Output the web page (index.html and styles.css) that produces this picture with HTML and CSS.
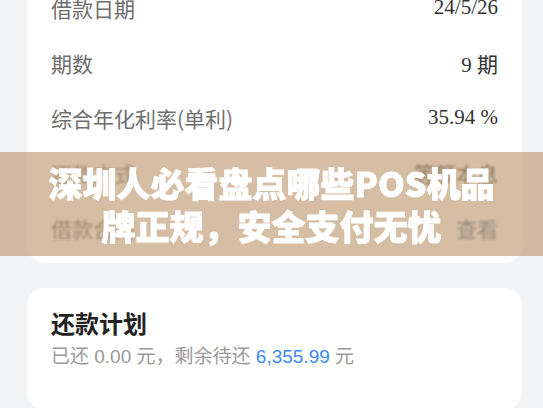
FILE: index.html
```html
<!DOCTYPE html>
<html lang="zh-CN">
<head>
    <meta charset="UTF-8">
    <meta name="viewport" content="width=device-width, initial-scale=1.0">
    <title>深圳人必看盘点哪些POS机品牌正规</title>
    <link rel="stylesheet" href="styles.css">
</head>
<body>
    <div class="page">
        <div class="card info">
            <div class="row">
                <span class="label">借款日期</span>
                <span class="value">24/5/26</span>
            </div>
            <div class="row">
                <span class="label">期数</span>
                <span class="value">9 期</span>
            </div>
            <div class="row">
                <span class="label">综合年化利率(单利)</span>
                <span class="value">35.94 %</span>
            </div>
            <div class="row">
                <span class="label">还款方式</span>
                <span class="value">等额本息</span>
            </div>
            <div class="row">
                <span class="label">借款合同</span>
                <span class="value link">查看</span>
            </div>
        </div>

        <div class="card plan">
            <h2>还款计划</h2>
            <p>已还 0.00 元，剩余待还 <span class="amount">6,355.99</span> 元</p>
        </div>
    </div>

    <div class="banner">
        <h1>深圳人必看盘点哪些POS机品牌正规，安全支付无忧</h1>
    </div>
</body>
</html>
```

FILE: styles.css
```css
body {
    margin: 0;
    background-color: #f2f3f5;
    font-family: "Noto Sans CJK SC", "Noto Sans", sans-serif;
    overflow: hidden;
}
.page {
    padding: 0 21px 0 27px;
}
.card {
    background-color: #fff;
    border-radius: 18px;
}
.info {
    margin-top: -20px;
    padding: 0 24px 8px 24px;
    border-top-left-radius: 0;
    border-top-right-radius: 0;
}
.row {
    display: flex;
    justify-content: space-between;
    align-items: center;
    height: 55px;
}
.label {
    font-size: 21px;
    color: #6e6e6e;
}
.value {
    font-family: "Liberation Serif", "Noto Sans CJK SC", serif;
    font-size: 21px;
    color: #333;
}
.value.link {
    font-family: "Noto Sans CJK SC", sans-serif;
    font-size: 21px;
    color: #576b95;
}
.plan {
    margin-top: 25px;
    padding: 18px 24px 40px;
}
.plan h2 {
    margin: 0;
    font-size: 24px;
    font-weight: 700;
    color: #222;
    line-height: 34px;
}
.plan p {
    margin: 4px 0 0;
    font-family: "Liberation Sans", "Noto Sans CJK SC", sans-serif;
    font-size: 19px;
    color: #999;
    line-height: 26px;
}
.amount {
    color: #3d8bf2;
}
.banner {
    position: absolute;
    left: 0;
    right: 0;
    top: 152px;
    height: 104px;
    display: flex;
    align-items: center;
    justify-content: center;
    background-color: rgba(190, 155, 115, 0.65);
    backdrop-filter: blur(1px);
}
.banner h1 {
    margin: 0;
    max-width: 462px;
    font-size: 34px;
    font-weight: 900;
    line-height: 43px;
    color: #fff;
    text-align: center;
    -webkit-text-stroke: 0.8px #fff;
}
```
